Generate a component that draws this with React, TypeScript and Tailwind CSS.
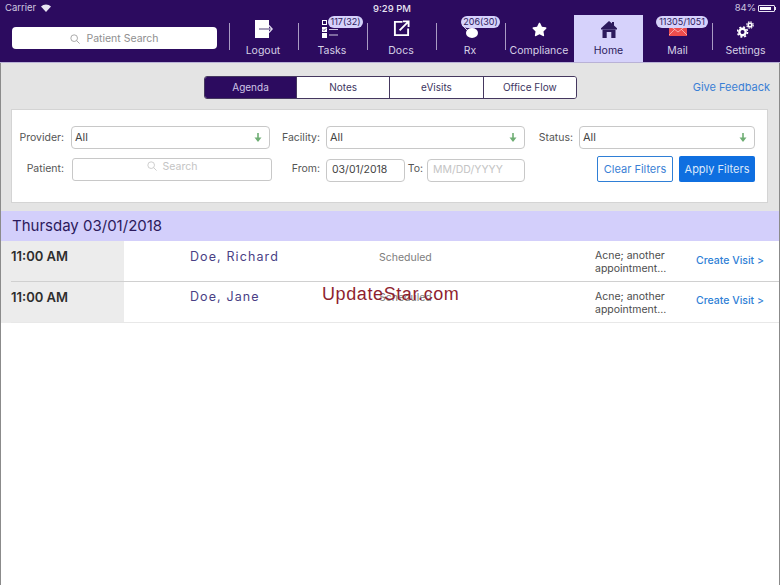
import { FaStar } from "react-icons/fa"

const FONT = "font-['Inter','Noto_Sans',sans-serif]"

// Icons drawn by hand where the packages have nothing close
function LogoutIcon() {
  return (
    <svg width="18" height="18" viewBox="0 0 18 18" className="ml-[1px]">
      <rect x="0" y="0" width="14" height="18" fill="#fff" />
      <path d="M4 9h10" stroke="#8f86a8" strokeWidth="1.6" />
      <path d="M14 9h3M14 5.5l3.2 3.5-3.2 3.5" stroke="#e0dbee" strokeWidth="1.2" fill="none" />
    </svg>
  )
}

function TasksIcon() {
  return (
    <svg width="17" height="18" viewBox="0 0 17 18" className="mr-[3px]">
      <rect x="0.5" y="0.5" width="4" height="4" fill="none" stroke="#fff" strokeWidth="1" />
      <rect x="0" y="7" width="5" height="5" fill="#fff" />
      <rect x="0" y="13" width="5" height="5" fill="#fff" />
      <path d="M1 9.5l1 1 2-2" stroke="#2c0b5f" strokeWidth="0.9" fill="none" />
      <path d="M7 9.5h9M7 15h9" stroke="#cfc9e0" strokeWidth="1" />
    </svg>
  )
}

function DocsIcon() {
  return (
    <svg width="17" height="17" viewBox="0 0 18 18" fill="none" stroke="#fff" strokeWidth="2" className="mb-[1px]">
      <path d="M10 2H2v14h14V9" />
      <path d="M7 11L16 2M10.5 1.5h6v6" />
    </svg>
  )
}

function RxIcon() {
  return (
    <svg width="20" height="14" viewBox="0 0 20 14" className="mb-[-1px]">
      <path d="M2 0l6 6" stroke="#fff" strokeWidth="0.8" />
      <ellipse cx="12" cy="8" rx="6" ry="5" fill="#fff" />
    </svg>
  )
}

function HomeIcon() {
  return (
    <svg width="16" height="17" viewBox="0 0 16 17">
      <path d="M8 0l3 2.6V1h2v3.4l3 2.8v1.3H0V7.2z" fill="#2c1a5c" />
      <path d="M1.5 8.5h13V17h-4.2v-6H5.7v6H1.5z" fill="#2c1a5c" />
    </svg>
  )
}

function MailIcon() {
  return (
    <svg width="18" height="13" viewBox="0 0 18 13" className="mb-[2px]">
      <rect x="0" y="0" width="18" height="13" fill="#ee4d4d" />
      <path d="M0 12l6-6M18 12l-6-6M0 2l9 7 9-7" stroke="#f9c0c0" strokeWidth="0.8" fill="none" />
    </svg>
  )
}

function SettingsIcon() {
  return (
    <svg width="17" height="17" viewBox="0 0 17 17" fill="none" stroke="#fff">
      <circle cx="5.5" cy="11" r="3.2" strokeWidth="2.4" />
      <circle cx="5.5" cy="11" r="5" strokeWidth="1.6" strokeDasharray="2 1.93" />
      <circle cx="13" cy="4" r="1.8" strokeWidth="1.6" />
      <circle cx="13" cy="4" r="3.2" strokeWidth="1.2" strokeDasharray="1.5 1.02" />
    </svg>
  )
}

function ArrowDown() {
  return (
    <svg width="8" height="9" viewBox="0 0 8 9" className="shrink-0">
      <path d="M4 0v8" stroke="#6fae74" strokeWidth="1.6" />
      <path d="M0.5 4.5L4 9l3.5-4.5z" fill="#6fae74" />
    </svg>
  )
}

function SearchGlass({ size, color }: { size: number; color: string }) {
  return (
    <svg width={size} height={size} viewBox="0 0 12 12" fill="none" stroke={color} strokeWidth="1">
      <circle cx="5" cy="5" r="4" />
      <path d="M8 8l3.5 3.5" />
    </svg>
  )
}

function Divider() {
  return <div className="w-px h-[27px] bg-[#a99bc4] shrink-0 mt-[8px]" />
}

interface NavItemProps {
  label: string
  icon: React.ReactNode
  badge?: string
  badgeClass?: string
  active?: boolean
  width?: string
}

function NavItem({ label, icon, badge, badgeClass, active, width = "w-[68px] pr-[2px]" }: NavItemProps) {
  return (
    <div className={`relative shrink-0 ${width} h-[47px] flex flex-col items-center ${active ? "bg-[#d6d2fb] text-[#2c1a5c]" : "text-[#d6d1e6]"}`}>
      <div className="h-[23px] flex items-end justify-center">{icon}</div>
      <span className="text-[10.5px] leading-[14px] mt-[6px] whitespace-nowrap">{label}</span>
      {badge && (
        <span className={`absolute top-[1px] h-[12px] rounded-full bg-[#d6d2fb] text-[#2c1a5c] text-[9px] leading-[12px] text-center ${badgeClass}`}>
          {badge}
        </span>
      )}
    </div>
  )
}

function Select({ width }: { width: string }) {
  return (
    <div className={`${width} h-[23px] bg-white border border-[#c8c8c8] rounded-[4px] flex items-center justify-between pl-[3px] pr-[7px] text-[11px] text-[#444]`}>
      <span>All</span>
      <ArrowDown />
    </div>
  )
}

function AppointmentRow({ name, line, first }: { name: string; line: string; first?: boolean }) {
  return (
    <div className="flex h-[41px] bg-white">
      <div className="w-[123px] bg-[#ececec] pl-[10px]">
        <div className={`h-full border-b ${line} pt-[8px] text-[13px] leading-[15px] font-semibold text-[#2e2e2e]`}>11:00 AM</div>
      </div>
      <div className={`flex-1 flex border-b ${line}`}>
        <div className={`w-[255px] pl-[66px] ${first ? "pt-[8px]" : "pt-[7px]"} text-[12.5px] leading-[16px] tracking-[1.1px] text-[#4a3f85]`}>{name}</div>
        <div className={`w-[216px] ${first ? "pt-[10px]" : "pt-[9px]"} text-[10.5px] leading-[13px] text-[#7d7d7d]`}>Scheduled</div>
        <div className="w-[101px] pt-[8px] text-[10.5px] leading-[13px] text-[#4d4d4d]">
          <div>Acne; another</div>
          <div>appointment...</div>
        </div>
        <div className={`${first ? "pt-[13px]" : "pt-[12px]"} text-[10.5px] leading-[14px] font-medium text-[#2f7fd6]`}>Create Visit &gt;</div>
      </div>
    </div>
  )
}

export default function App() {
  const tabs = ["Agenda", "Notes", "eVisits", "Office Flow"]

  return (
    <div className={`${FONT} relative w-[780px] h-[585px] bg-white overflow-hidden flex flex-col`}>
      {/* Status bar and top navigation */}
      <header className="h-[63px] shrink-0 bg-[#2c0b5f] border-b border-[#b9b2d6]">
        <div className="h-[15px] relative flex items-center justify-between pl-[5px] pr-[4px] pt-[1px] text-[9.5px] text-[#cfc9e0]">
          <div className="flex items-center gap-[5px]">
            <span>Carrier</span>
            <svg width="10" height="8" viewBox="0 0 10 8">
              <path d="M0 2.5a7 7 0 0 1 10 0L5 8z" fill="#e8e4f2" />
            </svg>
          </div>
          <div className="flex items-center gap-[2px]">
            <span>84%</span>
            <div className="w-[17px] h-[7px] border border-[#e8e4f2] rounded-[1px] p-px">
              <div className="w-[84%] h-full bg-white" />
            </div>
            <div className="w-px h-[3px] bg-[#e8e4f2] -ml-[2px]" />
          </div>
          <span className="absolute left-[373px] top-[2px] text-[#e8e4f2] font-medium">9:29 PM</span>
        </div>
        <div className="flex">
          <div className="w-[229px] shrink-0 pl-[12px] pt-[12px]">
            <div className="w-[205px] h-[22px] pt-[1px] bg-white rounded-[4px] flex items-center justify-center gap-[6px] text-[10.5px] text-[#8f8f8f]">
              <SearchGlass size={10} color="#999" />
              <span>Patient Search</span>
            </div>
          </div>
          <Divider />
          <NavItem label="Logout" icon={<LogoutIcon />} />
          <Divider />
          <NavItem label="Tasks" icon={<TasksIcon />} badge="117(32)" badgeClass="left-[29px] w-[35px]" />
          <Divider />
          <NavItem label="Docs" icon={<DocsIcon />} />
          <Divider />
          <NavItem label="Rx" icon={<RxIcon />} badge="206(30)" badgeClass="left-[24px] w-[39px]" />
          <Divider />
          <NavItem label="Compliance" icon={<FaStar size={15} color="#fff" className="mb-[1px]" />} />
          <NavItem label="Home" icon={<HomeIcon />} active width="w-[69px]" />
          <NavItem label="Mail" icon={<MailIcon />} badge="11305/1051" badgeClass="left-[13px] w-[52px]" width="w-[69px]" />
          <Divider />
          <NavItem label="Settings" icon={<SettingsIcon />} width="w-[68px] pr-[3px]" />
        </div>
      </header>

      <div className="flex-1 border-x border-[#8b8b8b]">
        <div className="bg-[#e4e4e4] h-[148px]">
          {/* Tabs and feedback link */}
          <div className="relative h-[46px] pt-[13px] pl-[203px]">
            <div className="flex w-[373px] h-[23px] rounded-[3px] border border-[#45385f] overflow-hidden text-[10px]">
              {tabs.map((tab, i) => (
                <div
                  key={tab}
                  className={`flex items-center justify-center ${i === 0 ? "w-[91px] bg-[#2c0b5f] text-[#cfc6e6]" : "flex-1 bg-white text-[#3d3560] border-l border-[#45385f]"}`}
                >
                  {tab}
                </div>
              ))}
            </div>
            <span className="absolute right-[9px] top-[17px] text-[11px] leading-[14px] text-[#3a7fd5]">Give Feedback</span>
          </div>

          {/* Filters */}
          <div className="ml-[10px] w-[757px] h-[94px] bg-white border border-[#d4d4d4] pt-[16px] text-[10.5px] text-[#555]">
            <div className="flex items-center h-[23px]">
              <span className="w-[52px] text-right shrink-0">Provider:</span>
              <div className="w-[7px]" />
              <Select width="w-[199px]" />
              <span className="w-[50px] text-right">Facility:</span>
              <div className="w-[6px]" />
              <Select width="w-[199px]" />
              <span className="w-[48px] text-right">Status:</span>
              <div className="w-[6px]" />
              <Select width="w-[176px]" />
            </div>
            <div className="flex items-center h-[26px] mt-[7px]">
              <span className="w-[52px] text-right">Patient:</span>
              <div className="w-[8px] shrink-0" />
              <div className="w-[200px] h-[23px] mt-[1px] bg-white border border-[#c8c8c8] rounded-[3px] flex items-start justify-center gap-[6px] pt-[2px] text-[#c4c4c4]">
                <SearchGlass size={10} color="#c4c4c4" />
                <span className="leading-[12px]">Search</span>
              </div>
              <span className="w-[48px] text-right">From:</span>
              <div className="w-[6px]" />
              <div className="w-[79px] h-[23px] mt-[2px] bg-white border border-[#c8c8c8] rounded-[4px] flex items-center pl-[5px] text-[#444]">03/01/2018</div>
              <span className="w-[18px] text-right">To:</span>
              <div className="w-[4px]" />
              <div className="w-[98px] h-[23px] mt-[2px] bg-white border border-[#c8c8c8] rounded-[4px] flex items-center pl-[5px] text-[#c4c4c4]">MM/DD/YYYY</div>
              <div className="w-[72px]" />
              <div className="w-[76px] h-[26px] rounded-[2px] border border-[#2f7fd6] text-[#3a7fd5] flex items-center justify-center text-[11px]">Clear Filters</div>
              <div className="w-[6px]" />
              <div className="w-[76px] h-[26px] rounded-[2px] bg-[#0f6fe0] text-[#dbe8fb] flex items-center justify-center text-[11px]">Apply Filters</div>
            </div>
          </div>
        </div>

        {/* Day agenda */}
        <div className="h-[30px] bg-[#d3cffb] pl-[11px] flex items-center text-[15px] text-[#2c1a5c]">Thursday 03/01/2018</div>
        <AppointmentRow name="Doe, Richard" line="border-[#d0d0d0]" first />
        <AppointmentRow name="Doe, Jane" line="border-[#e8e8e8]" />
      </div>

      {/* Watermark */}
      <span className="absolute left-[322px] top-[284px] font-['Liberation_Sans',sans-serif] text-[18px] leading-[21px] tracking-[0.6px] text-[#8f1f2f]">UpdateStar.com</span>
    </div>
  )
}
